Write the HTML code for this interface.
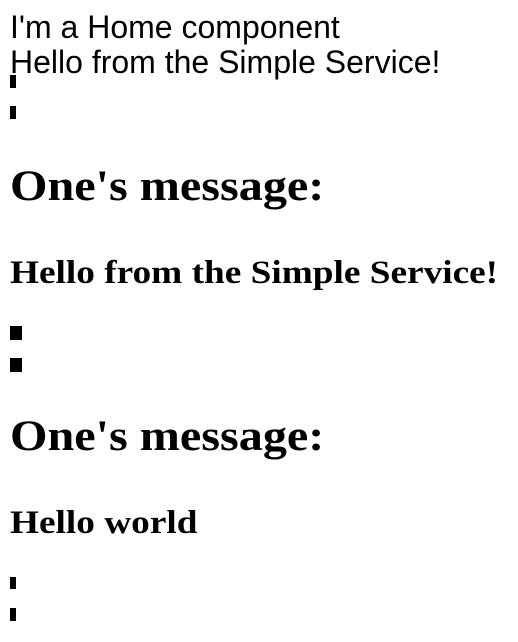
<!DOCTYPE html>
<html><head><style>
body{margin:0;width:518px;height:642px;background:#fff;position:relative;overflow:hidden;color:#000}
.t{position:absolute;left:10px;white-space:nowrap;line-height:1;transform-origin:0 0}
.a{font:32px "Liberation Sans",Arial,sans-serif}
.h1{font:bold 43px "Liberation Serif",serif;transform:scaleX(1.12)}
.h2{font:bold 33px "Liberation Serif",serif;transform:scaleX(1.13)}
.m{position:absolute;left:10px;background:#000}
</style></head><body>
<div class="t a" style="top:9px">I'm a Home component</div>
<div class="t a" style="top:44px">Hello from the Simple Service!</div>
<div class="m" style="top:75px;width:6px;height:13px"></div>
<div class="m" style="top:106px;width:6px;height:13px"></div>
<div class="t h1" style="top:162px">One's message:</div>
<div class="t h2" style="top:255px">Hello from the Simple Service!</div>
<div class="m" style="top:326px;width:12px;height:14px"></div>
<div class="m" style="top:358px;width:12px;height:14px"></div>
<div class="t h1" style="top:412px">One's message:</div>
<div class="t h2" style="top:505px">Hello world</div>
<div class="m" style="top:577px;width:6px;height:12px"></div>
<div class="m" style="top:608px;width:6px;height:13px"></div>
</body></html>
